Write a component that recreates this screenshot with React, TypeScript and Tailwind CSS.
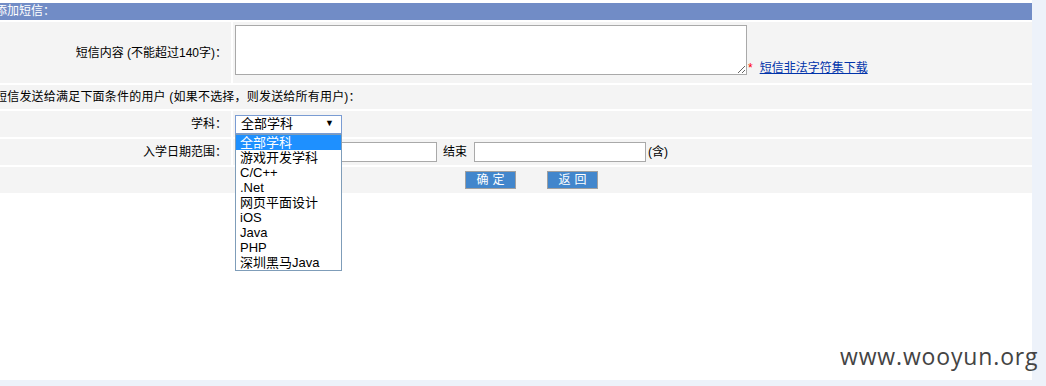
import React from "react";

const subjects = [
  "全部学科",
  "游戏开发学科",
  "C/C++",
  ".Net",
  "网页平面设计",
  "iOS",
  "Java",
  "PHP",
  "深圳黑马Java",
];

function App() {
  return (
    <div
      className="relative w-[1046px] h-[386px] overflow-hidden bg-[#edf2fa] text-[12px] text-black"
      style={{ fontFamily: '"Liberation Sans", "Noto Sans CJK SC", sans-serif' }}
    >
      <div className="w-[1032px] h-[380px] bg-white pt-[3px] flex flex-col gap-[2px]">
        {/* header */}
        <div className="h-[17px] bg-[#718cc6] text-white leading-[17px] -indent-[5px]">
          添加短信：
        </div>

        {/* content */}
        <div className="grid grid-cols-[231px_1fr] gap-x-[2px] h-[61px]">
          <div className="bg-[#f4f4f4] flex items-center justify-end pr-[4px]">
            短信内容 (不能超过140字)：
          </div>
          <div className="bg-[#f4f4f4] flex items-end pl-[2px] pb-[8px]">
            <textarea className="w-[512px] h-[50px] border border-[#a9a9a9] bg-white resize outline-none" />
            <span className="text-[#ff0000] ml-[1px] leading-[14px]">*</span>
            <a href="#" className="ml-[7px] text-[#0033aa] underline leading-[14px]">
              短信非法字符集下载
            </a>
          </div>
        </div>

        <div className="h-[24px] bg-[#f4f4f4] flex items-center -ml-[5px] tracking-[0.2px]">
          短信发送给满足下面条件的用户 (如果不选择，则发送给所有用户)：
        </div>

        {/* subject */}
        <div className="grid grid-cols-[231px_1fr] gap-x-[2px] h-[26px]">
          <div className="bg-[#f4f4f4] flex items-center justify-end pr-[4px]">学科：</div>
          <div className="bg-[#f4f4f4] flex items-center pl-[2px] relative">
            <div className="w-[107px] h-[19px] border border-[#7a9cd3] bg-white flex items-center justify-between pl-[5px] pr-[7px] text-[13px]">
              <span>全部学科</span>
              <span className="text-[9px]">▼</span>
            </div>
          </div>
        </div>

        {/* date */}
        <div className="grid grid-cols-[231px_1fr] gap-x-[2px] h-[26px]">
          <div className="bg-[#f4f4f4] flex items-center justify-end pr-[4px]">入学日期范围：</div>
          <div className="bg-[#f4f4f4] flex items-center pl-[2px]">
            <input className="w-[202px] h-[20px] border border-[#a9a9a9] bg-white outline-none" />
            <span className="ml-[6px] mr-[7px]">结束</span>
            <input className="w-[172px] h-[20px] border border-[#a9a9a9] bg-white outline-none" />
            <span className="ml-[2px]">(含)</span>
          </div>
        </div>

        {/* buttons */}
        <div className="h-[26px] bg-[#f4f4f4] flex items-center pl-[465px] gap-[31px]">
          <button className="w-[51px] h-[18px] border border-[#a0a0a0] bg-[#4286cc] text-white leading-[16px] tracking-[4px] indent-[4px]">
            确定
          </button>
          <button className="w-[51px] h-[18px] border border-[#a0a0a0] bg-[#4286cc] text-white leading-[16px] tracking-[4px] indent-[4px]">
            返回
          </button>
        </div>
      </div>

      {/* open dropdown */}
      <div className="absolute left-[235px] top-[134px] w-[107px] border border-[#7f9db9] bg-white">
        {subjects.map((s, i) => (
          <div
            key={s}
            className={`h-[15px] leading-[15px] pl-[4px] text-[13px] ${
              i === 0 ? "bg-[#1e90ff] text-white" : "text-black"
            }`}
          >
            {s}
          </div>
        ))}
      </div>

      <div
        className="absolute left-[840px] top-[339px] text-[23px] text-[#444] tracking-[0.85px]"
        style={{ fontFamily: '"Open Sans", "DejaVu Sans", sans-serif' }}
      >
        www.wooyun.org
      </div>
    </div>
  );
}

export default App;
